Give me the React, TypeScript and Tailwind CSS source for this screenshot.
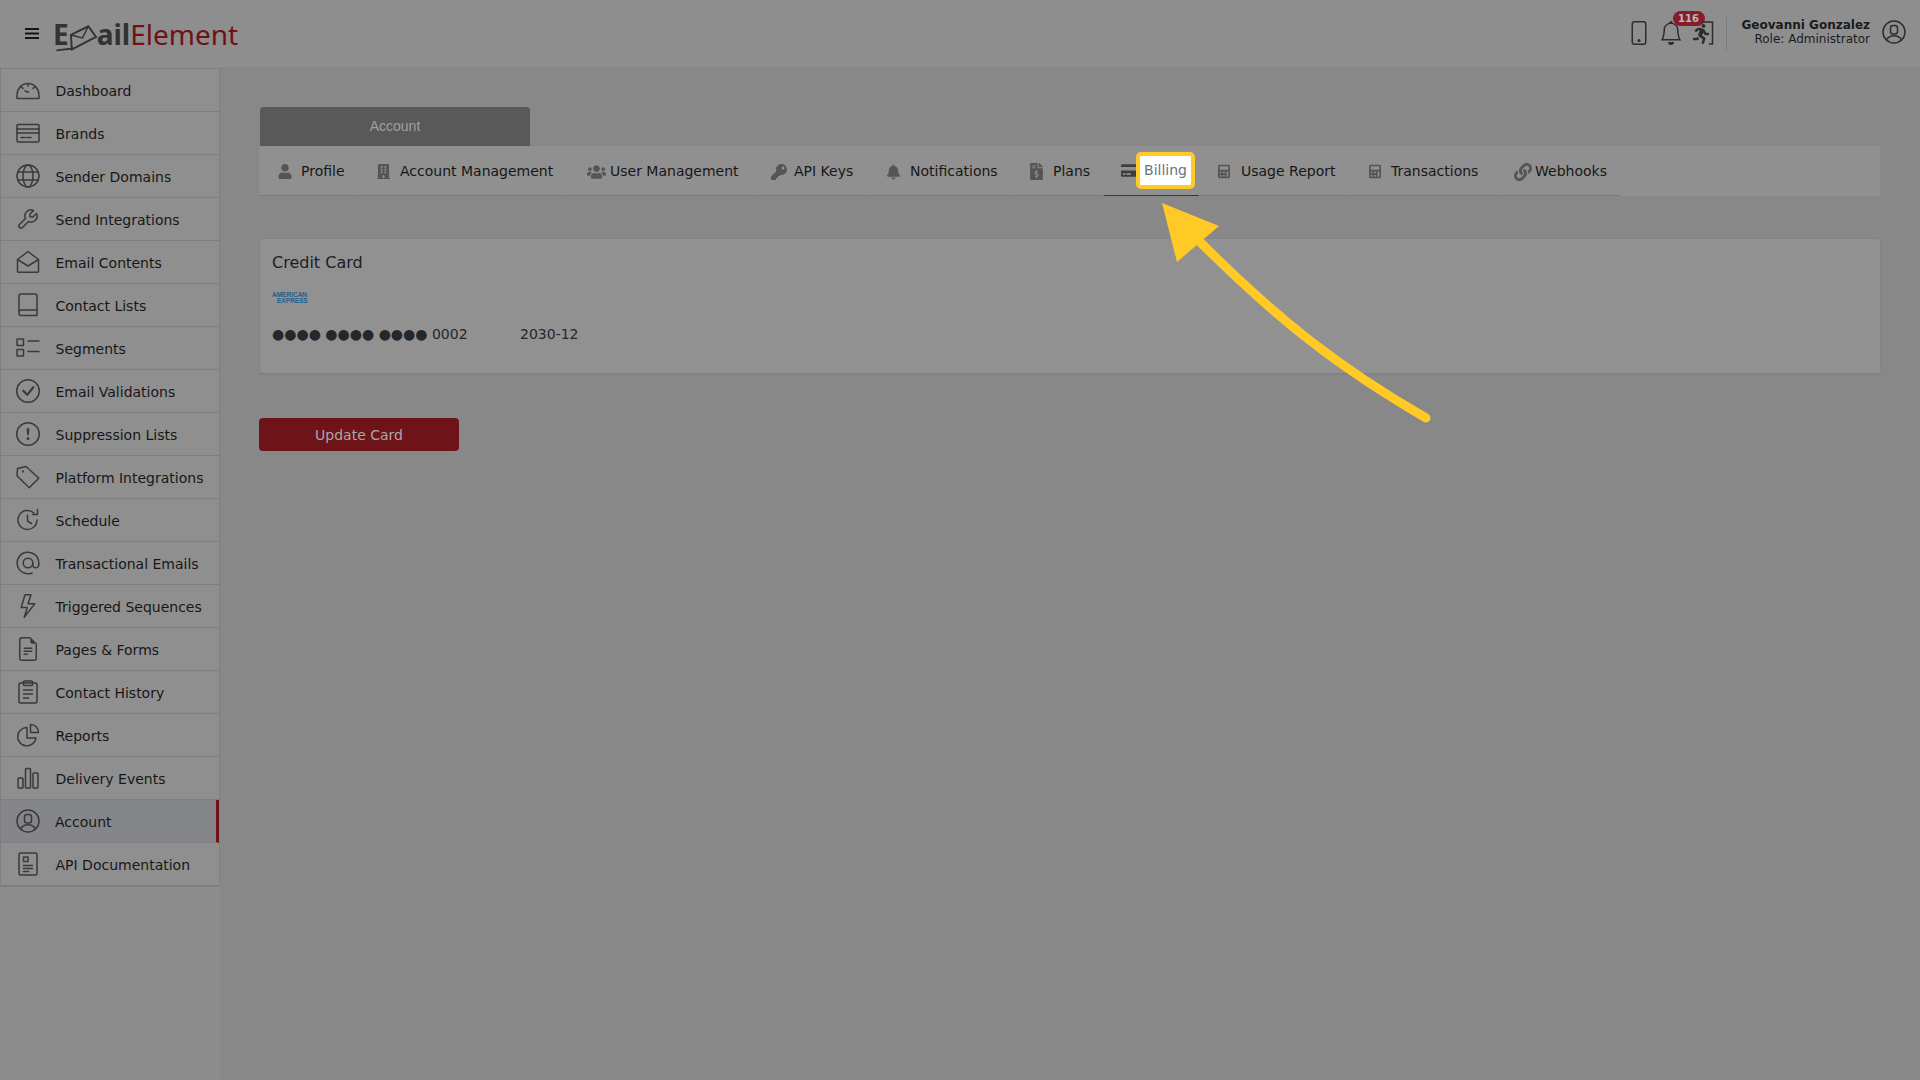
import React from "react";
import { BsCheckCircle, BsExclamationCircle, BsLightning, BsFileEarmarkText, BsPhone, BsBell } from "react-icons/bs";
import { FaUser, FaBuilding, FaUsers, FaKey, FaBell, FaFileInvoiceDollar, FaCreditCard, FaCalculator, FaLink, FaRunning } from "react-icons/fa";

const S = ({ children, size = 24, vb = "0 0 24 24", sw = "1.5" }: { children: React.ReactNode; size?: number; vb?: string; sw?: string }) => (
  <svg width={size} height={size} viewBox={vb} fill="none" stroke="currentColor" strokeWidth={sw} strokeLinecap="round" strokeLinejoin="round">{children}</svg>
);
const Dash = () => <S><path d="M1 20v-3a11 11.5 0 0 1 22 0v3a.6.6 0 0 1-.6.6H1.6A.6.6 0 0 1 1 20z" /><path d="M12 6v2M5.5 9l1.5 1.5M18.5 9L17 10.5M9 13l3.5 1.2" /></S>;
const Brand = () => <S><rect x="1" y="3.5" width="22" height="17.5" rx="1.2" /><path d="M1 8h22M1 12h22M5 16.5h4M11 16.5h4" /></S>;
const Globe = () => <S><circle cx="12" cy="12" r="11" /><ellipse cx="12" cy="12" rx="5" ry="11" /><path d="M2 8h20M2 16h20" /></S>;
const Wrench = () => <S vb="0 0 24 24"><g transform="translate(24 0) scale(-1 1)"><path d="M7 10h3V7L6.5 3.5a6 6 0 0 1 8 8l6 6a2 2 0 0 1-3 3l-6-6a6 6 0 0 1-8-8L7 10" /></g></S>;
const Env = () => <S><path d="M1.5 9.5L12 1.5l10.5 8v12a.8.8 0 0 1-.8.8H2.3a.8.8 0 0 1-.8-.8z" /><path d="M1.5 9.5L12 16l10.5-6.5" /></S>;
const Tag = () => <S><path d="M1.5 3.5L10 1.5l12.8 11.7-9.6 9.5L1 10.8z" /><circle cx="7" cy="6.5" r=".4" /></S>;
const At = () => <S vb="2 2 20 20" sw="1.25"><circle cx="12" cy="12" r="4" /><path d="M16 12v1.5a2.5 2.5 0 0 0 5 0V12a9 9 0 1 0-5.5 8.28" /></S>;
const Bars = () => <S><rect x="2" y="12" width="5" height="10" rx=".8" /><rect x="9.5" y="2.5" width="5" height="19.5" rx=".8" /><rect x="17" y="7" width="5" height="15" rx=".8" /></S>;
const Book = () => <S><path d="M3 3a2 2 0 0 1 2-2h14a2 2 0 0 1 2 2v19.5H5a2 2 0 0 1-2-2z" /><path d="M3 18.5a2 2 0 0 1 2-1.5h16" /></S>;
const Seg = () => <S><rect x="1" y="3" width="6.5" height="6.5" rx=".6" /><rect x="1" y="13.5" width="6.5" height="6.5" rx=".6" /><path d="M12 5h11M12 15.5h11" /></S>;
const Sched = () => <S><path d="M21 12a9.5 9.5 0 1 1-3-7" /><path d="M21.5 1.5v5h-5" /><path d="M11.5 7v6l4 2.5" /></S>;
const Clip = () => <S><rect x="3" y="3" width="18" height="20" rx="1.5" /><rect x="7.5" y="1" width="9" height="4.5" rx=".8" /><path d="M7.5 10h9M7.5 14h9M7.5 18h5" /></S>;
const Pie = () => <S><path d="M11 4.5a9.2 9.2 0 1 0 9 10.5h-9z" /><path d="M14.5 1.5a8 8 0 0 1 8 8h-8z" /></S>;
const Person = ({ size = 24 }: { size?: number }) => <S size={size}><circle cx="12" cy="12" r="11" /><rect x="8.5" y="5.5" width="7" height="8.5" rx="2.5" /><path d="M4.5 20c1.5-3 4-4.2 7.5-4.2s6 1.2 7.5 4.2" /></S>;
const Doc = () => <S><rect x="3" y="1" width="18" height="22" rx="1.5" /><rect x="7.5" y="5" width="4.5" height="4.5" /><path d="M7.5 13.5h9M7.5 16.5h9M7.5 19.5h5" /></S>;

const nav: [string, React.ReactNode][] = [
  ["Dashboard", <Dash />],
  ["Brands", <Brand />],
  ["Sender Domains", <Globe />],
  ["Send Integrations", <Wrench />],
  ["Email Contents", <Env />],
  ["Contact Lists", <Book />],
  ["Segments", <Seg />],
  ["Email Validations", <BsCheckCircle size={24} />],
  ["Suppression Lists", <BsExclamationCircle size={24} />],
  ["Platform Integrations", <Tag />],
  ["Schedule", <Sched />],
  ["Transactional Emails", <At />],
  ["Triggered Sequences", <BsLightning size={24} />],
  ["Pages & Forms", <BsFileEarmarkText size={24} />],
  ["Contact History", <Clip />],
  ["Reports", <Pie />],
  ["Delivery Events", <Bars />],
  ["Account", <Person />],
  ["API Documentation", <Doc />],
];

const tabs = [
  { t: "Profile", w: "w-[100px]", p: "pl-[19px]", iw: "w-[14px]", g: "mr-[9px]", i: <FaUser size={15} /> },
  { t: "Account Management", w: "w-[207px]", p: "pl-[17px]", iw: "w-[13px]", g: "mr-[10px]", i: <FaBuilding size={17} /> },
  { t: "User Management", w: "w-[184px]", p: "pl-[19px]", iw: "w-[19px]", g: "mr-[4px]", i: <FaUsers size={20} /> },
  { t: "API Keys", w: "w-[115px]", p: "pl-[18px]", iw: "w-[16px]", g: "mr-[7px]", i: <FaKey size={16} /> },
  { t: "Notifications", w: "w-[142px]", p: "pl-[18px]", iw: "w-[13px]", g: "mr-[10px]", i: <FaBell size={16} /> },
  { t: "Plans", w: "w-[91px]", p: "pl-[18px]", iw: "w-[13px]", g: "mr-[10px]", i: <FaFileInvoiceDollar size={17} /> },
  { t: "Billing", w: "w-[95px]", p: "pl-[17px]", iw: "w-[16px]", g: "mr-[7px]", i: <FaCreditCard size={17} className="-mt-[3px]" /> },
  { t: "Usage Report", w: "w-[149px]", p: "pl-[18px]", iw: "w-[12px]", g: "mr-[11px]", i: <FaCalculator size={17} /> },
  { t: "Transactions", w: "w-[149px]", p: "pl-[19px]", iw: "w-[12px]", g: "mr-[10px]", i: <FaCalculator size={17} /> },
  { t: "Webhooks", w: "w-[120px]", p: "pl-[13px]", iw: "w-[19px]", g: "mr-[3px]", i: <FaLink size={18} /> },
];

export default function App() {
  return (
    <div className="relative h-[1080px] w-[1920px] overflow-hidden bg-[#888888] font-['DejaVu_Sans',sans-serif] text-[14px] text-[#171717]">
      <header className="flex h-[67px] items-center bg-[#8e8e8e]">
        <svg width="14" height="11" viewBox="0 0 14 11" className="ml-[25px] mb-[1px] text-[#151515]"><path d="M0 1h14M0 5.5h14M0 10h14" stroke="currentColor" strokeWidth="1.8" /></svg>
        <div className="ml-[14px] flex items-center font-['Noto_Sans',sans-serif] text-[28px] leading-none">
          <span className="font-bold text-[#333333]">E</span>
          <svg width="28" height="34" viewBox="0 0 29 34" className="overflow-visible text-[#333333]">
            <path d="M2 18L20 9l8 11L3 33z" fill="none" stroke="currentColor" strokeWidth="2" />
            <path d="M2 18l12 3 6-12" fill="none" stroke="currentColor" strokeWidth="1.5" />
            <path d="M-13 34L4 32" stroke="currentColor" strokeWidth="2" />
          </svg>
          <span className="font-bold text-[#333333]">ail</span>
          <span className="text-[#6f1218]">Element</span>
        </div>
        <div className="ml-auto flex items-center text-[#2d2d2d]">
          <BsPhone size={24} className="mr-[8px] -mt-[2px]" />
          <div className="relative mr-[9px] -mt-[2px]">
            <BsBell size={24} />
            <span className="absolute -right-[22px] -top-[10px] flex h-[15px] w-[32px] items-center justify-center rounded-full bg-[#8a1c2a] text-[10px] font-bold text-[#b8b8b8]">116</span>
          </div>
          <div className="relative mr-[10px] -mt-[2px] h-[24px] w-[24px]">
            <svg width="24" height="24" viewBox="0 0 24 24" fill="none" stroke="currentColor" strokeWidth="1.5"><path d="M9 1h11.5v22H17" /></svg>
            <FaRunning size={20} className="absolute -left-[1px] top-[3px]" />
          </div>
          <div className="h-[34px] w-px bg-[#7b7b7b]" />
          <div className="ml-[15px] mr-[12px] -mt-[3px] text-right text-[12px] leading-[14px] text-[#1b1b1f]">
            <div className="font-bold">Geovanni Gonzalez</div>
            <div>Role: Administrator</div>
          </div>
          <div className="mr-[14px] -mt-[3px]"><Person /></div>
        </div>
      </header>
      <div className="flex h-[1013px]">
        <aside className="h-full w-[220px] shrink-0 bg-[#8d8d8d]">
          <nav className="mt-px border-x border-t border-[#7f7f7f] shadow-[0_1px_0_#7f7f7f]">
            {nav.map(([label, icon]) => {
              const active = label === "Account";
              return (
                <div key={label} className={`flex h-[43px] items-center border-b border-[#7f7f7f] pt-[2px] ${active ? "border-r-[3px] border-r-[#6f1218] bg-[#85868a]" : "bg-[#8f8f8f]"}`}>
                  <span className="ml-[15px] -mt-[2px] flex w-[24px] justify-center text-[#3a3a3a]">{icon}</span>
                  <span className={active ? "ml-[15px]" : "ml-[15.5px]"}>{label}</span>
                </div>
              );
            })}
          </nav>
        </aside>
        <main className="flex-1 pl-[39px] pr-[40px] pt-[40px]">
          <div className="ml-px flex h-[39px] w-[270px] items-center justify-center rounded-t-[4px] bg-[#595959] font-['Liberation_Sans',sans-serif] text-[14px] text-[#a0a0a0]">Account</div>
          <div className="flex h-[50px] gap-px bg-[#909090]">
            {tabs.map((x) => {
              const on = x.t === "Billing";
              return (
                <div key={x.t} className={`relative flex h-[50px] items-center border-b pt-[2px] ${x.w} ${x.p} ${on ? "border-[#3a3a3a]" : "border-[#7a7a7a]"}`}>
                  <span className={`flex ${x.iw} ${x.g} shrink-0 justify-center ${on ? "text-[#3d3d3d]" : "text-[#555555]"}`}>{x.i}</span>
                  <span className="whitespace-nowrap">{x.t}</span>
                  {on && (
                    <span className="absolute left-[32px] top-[6px] flex h-[37px] w-[59px] items-center justify-center rounded-[5px] border-[4px] border-[#ffc926] bg-white text-[#6b7280]">Billing</span>
                  )}
                </div>
              );
            })}
          </div>
          <section className="ml-px mt-[43px] h-[135px] rounded-[2px] border-b border-[#808080] bg-[#919191] px-[12px] pt-[14px] shadow-[0_0_1px_rgba(0,0,0,0.3)]">
            <div className="text-[16px] leading-[19px] text-[#1a1d21]">Credit Card</div>
            <div className="mt-[20px] h-[14px] font-['Liberation_Sans',sans-serif] text-[6.5px] font-bold leading-[6px] text-[#1d5f8e]">
              <div>AMERICAN</div>
              <div className="pl-[5px]">EXPRESS</div>
            </div>
            <div className="mt-[18px] flex items-center text-[#24272b]">
              <span className="w-[248px] whitespace-nowrap">●●●● ●●●● ●●●● 0002</span>
              <span>2030-12</span>
            </div>
          </section>
          <button className="mt-[44px] flex h-[33px] w-[200px] items-center justify-center rounded-[4px] bg-[#6e1418] pt-[1px] text-[14px] text-[#a8a8a8]">Update Card</button>
        </main>
      </div>
      <svg className="pointer-events-none absolute left-0 top-0" width="1920" height="1080" fill="none">
        <path d="M1426 418 C1340 368 1280 322 1196 238" stroke="#ffc926" strokeWidth="9" strokeLinecap="round" />
        <polygon points="1162,203 1219,226 1177,262" fill="#ffc926" />
      </svg>
    </div>
  );
}
